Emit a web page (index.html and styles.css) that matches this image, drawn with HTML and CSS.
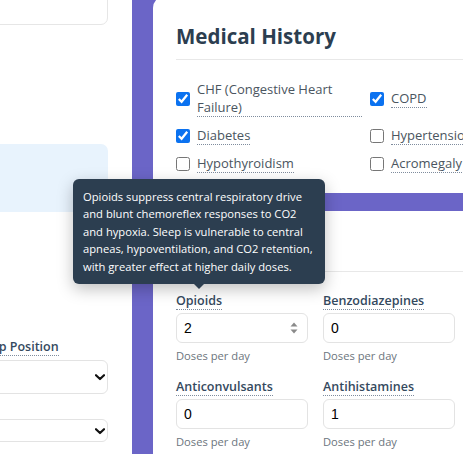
FILE: index.html
```html
<!DOCTYPE html>
<html lang="en">
<head>
<meta charset="utf-8">
<title>Sleep Assessment</title>
<link rel="stylesheet" href="styles.css">
</head>
<body>
<div class="page">
  <aside class="sidebar">
    <div class="side-card"></div>
    <div class="info-box"></div>
    <div class="side-group">
      <label class="side-label">Sleep Position</label>
      <div class="select-wrap">
        <select class="side-select"><option></option></select>
        <svg class="chev" viewBox="0 0 10 7" width="10" height="7"><path d="M1 1.2 L5 5 L9 1.2" fill="none" stroke="#111" stroke-width="2.2" stroke-linecap="round" stroke-linejoin="round"/></svg>
      </div>
    </div>
    <div class="side-group">
      <div class="select-wrap">
        <select class="side-select small"><option></option></select>
        <svg class="chev" viewBox="0 0 10 7" width="10" height="7"><path d="M1 1.2 L5 5 L9 1.2" fill="none" stroke="#111" stroke-width="2.2" stroke-linecap="round" stroke-linejoin="round"/></svg>
      </div>
    </div>
  </aside>
  <main class="main">
    <section class="card history">
      <h2 class="card-title">Medical History</h2>
      <div class="check-grid">
        <div class="check-item"><input type="checkbox" checked><span class="check-label">CHF (Congestive Heart Failure)</span></div>
        <div class="check-item"><input type="checkbox" checked><span class="check-label">COPD</span></div>
        <div class="check-item"><input type="checkbox" checked><span class="check-label">Diabetes</span></div>
        <div class="check-item"><input type="checkbox"><span class="check-label">Hypertension</span></div>
        <div class="check-item"><input type="checkbox"><span class="check-label">Hypothyroidism</span></div>
        <div class="check-item"><input type="checkbox"><span class="check-label">Acromegaly</span></div>
      </div>
    </section>
    <section class="card meds">
      <h2 class="card-title meds-title">Medications</h2>
      <div class="med-grid">
        <div class="med-item">
          <span class="med-label has-tip">Opioids
            <span class="tooltip">Opioids suppress central respiratory drive and blunt chemoreflex responses to CO2 and hypoxia. Sleep is vulnerable to central apneas, hypoventilation, and CO2 retention, with greater effect at higher daily doses.</span>
          </span>
          <div class="input-wrap">
            <input class="med-input" type="text" value="2">
            <svg class="spin" viewBox="0 0 8 14" width="8" height="14"><path d="M4 1.5 L7.5 5.5 H0.5 Z M4 12.5 L7.5 8.5 H0.5 Z" fill="#8a8a8a"/></svg>
          </div>
          <span class="hint">Doses per day</span>
        </div>
        <div class="med-item">
          <span class="med-label">Benzodiazepines</span>
          <input class="med-input" type="text" value="0">
          <span class="hint">Doses per day</span>
        </div>
        <div class="med-item">
          <span class="med-label">Anticonvulsants</span>
          <input class="med-input" type="text" value="0">
          <span class="hint">Doses per day</span>
        </div>
        <div class="med-item">
          <span class="med-label">Antihistamines</span>
          <input class="med-input" type="text" value="1">
          <span class="hint">Doses per day</span>
        </div>
      </div>
    </section>
  </main>
</div>
</body>
</html>
```

FILE: styles.css
```css
html, body {
  margin: 0;
  padding: 0;
  overflow: hidden;
  background: #ffffff;
}
body {
  font-family: "Open Sans", "Noto Sans", sans-serif;
  color: #2c3e50;
}
.page {
  display: flex;
  align-items: flex-start;
  width: 900px;
  margin-left: -26px;
  margin-top: -20px;
}

/* sidebar */
.sidebar {
  flex: none;
  width: 134px;
  margin-right: 24px;
  display: flex;
  flex-direction: column;
}
.side-card {
  height: 43px;
  border: 1px solid #e6e6e6;
  border-radius: 7px;
  background: #fff;
}
.info-box {
  margin-top: 119px;
  height: 68px;
  background: #e8f3fd;
  border-radius: 7px;
}
.side-group {
  display: flex;
  flex-direction: column;
  align-items: flex-start;
}
.info-box + .side-group { margin-top: 126px; }
.side-group + .side-group { margin-top: 25px; }
.side-label {
  font-size: 12.5px;
  font-weight: 600;
  color: #34495e;
  line-height: 17px;
  border-bottom: 1px dotted #7f8c9d;
  margin-bottom: 4px;
}
.select-wrap {
  position: relative;
  width: 134px;
}
.side-select {
  appearance: none;
  -webkit-appearance: none;
  display: block;
  width: 100%;
  height: 34px;
  border: 1px solid #e3e3e3;
  border-radius: 6px;
  background: #fff;
  font: inherit;
}
.side-select.small { height: 23px; }
.chev {
  position: absolute;
  right: 3px;
  top: 50%;
  margin-top: -3px;
}

/* main */
.main {
  flex: none;
  width: 620px;
  background: #6b65c7;
  padding: 16px 21px 40px;
}
.card {
  background: #fff;
  border-radius: 12px;
  padding: 27px 23px 20px;
}
.card + .card { margin-top: 18px; }
.card-title {
  margin: 0;
  font-size: 20.5px;
  font-weight: 700;
  line-height: 26px;
  color: #2c3e50;
  padding-bottom: 10px;
  border-bottom: 1px solid #e8e8e8;
}
.meds-title { padding-bottom: 7px; }

.check-grid {
  margin-top: 20px;
  display: grid;
  grid-template-columns: repeat(2, 186px);
  column-gap: 8px;
  row-gap: 9px;
  align-items: center;
}
.check-item {
  display: flex;
  align-items: center;
  gap: 7px;
}
.check-item input {
  flex: none;
  margin: 0;
  width: 14px;
  height: 14px;
  accent-color: #0b72f0;
}
.check-label {
  font-size: 13px;
  line-height: 18px;
  color: #4a5560;
  border-bottom: 1px dotted #7f8c9d;
}

.med-grid {
  margin-top: 21px;
  display: grid;
  grid-template-columns: repeat(2, 132px);
  column-gap: 15px;
  row-gap: 15px;
}
.med-item {
  display: flex;
  flex-direction: column;
  align-items: flex-start;
}
.med-label {
  font-size: 12.5px;
  font-weight: 600;
  line-height: 16px;
  color: #34495e;
  border-bottom: 1px dotted #7f8c9d;
  margin-bottom: 3px;
}
.has-tip { position: relative; }
.tooltip {
  position: absolute;
  bottom: calc(100% + 9px);
  left: 50%;
  transform: translateX(-50%);
  width: 232px;
  padding: 9px 10px;
  background: #2c3e50;
  color: #fff;
  border-radius: 6px;
  font-size: 11.2px;
  font-weight: 400;
  line-height: 17.5px;
  box-shadow: 0 5px 16px rgba(0,0,0,0.25);
  z-index: 5;
}
.tooltip::after {
  content: "";
  position: absolute;
  top: 100%;
  left: 50%;
  margin-left: -5px;
  border: 5px solid transparent;
  border-top-color: #2c3e50;
}
.input-wrap {
  position: relative;
  width: 132px;
}
.med-input {
  box-sizing: border-box;
  display: block;
  width: 132px;
  height: 30px;
  border: 1px solid #e3e3e3;
  border-radius: 6px;
  padding: 0 7px;
  font-family: "Liberation Sans", Arial, sans-serif;
  font-size: 14px;
  color: #000;
  background: #fff;
}
.spin {
  position: absolute;
  right: 10px;
  top: 8px;
}
.hint {
  margin-top: 5px;
  font-size: 11.2px;
  line-height: 16px;
  color: #6c757d;
}
```
